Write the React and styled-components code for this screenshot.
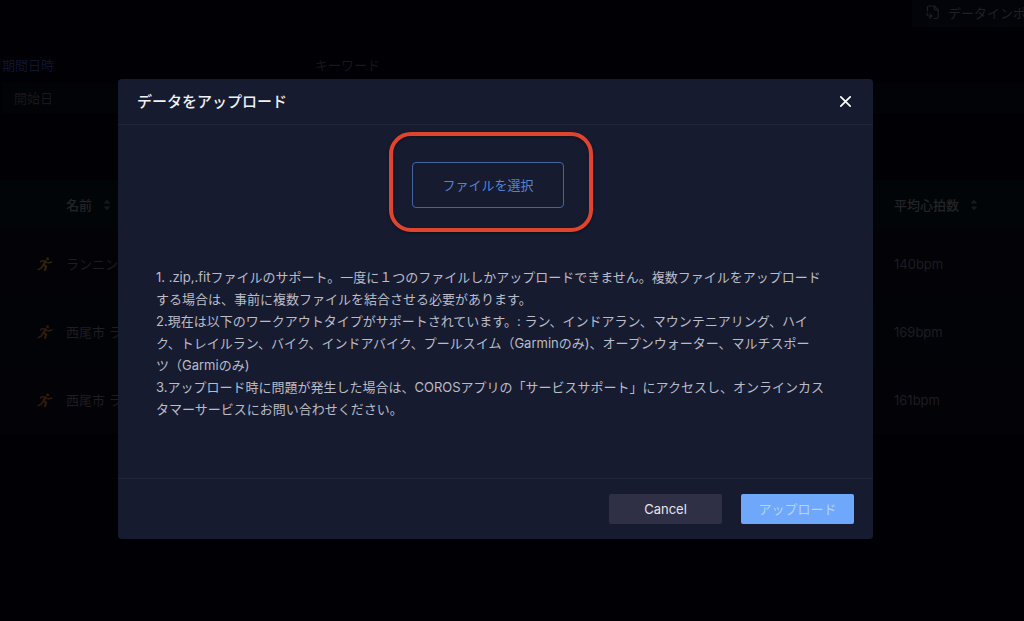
import React from 'react';
import styled, { createGlobalStyle } from 'styled-components';

const GlobalStyle = createGlobalStyle`
	* {
		box-sizing: border-box;
	}

	body {
		margin: 0;
		min-height: 100vh;
		overflow: hidden;
		background: #000005;
		font-family: Inter, 'Noto Sans CJK JP', sans-serif;
		font-size: 13px;
		line-height: 20px;
	}

	button,
	input {
		font: inherit;
	}
`;

const Page = styled.main`
	color: #1d1d22;
`;

const TopBar = styled.div`
	display: flex;
	justify-content: flex-end;
	height: 27px;
`;

const ImportButton = styled.button`
	display: flex;
	align-items: center;
	gap: 8px;
	width: 112px;
	padding: 0 0 2px 14px;
	overflow: hidden;
	border: 0;
	background: #030409;
	color: #1f1f24;
	white-space: nowrap;

	svg {
		flex: none;
	}
`;

const Filters = styled.form`
	display: grid;
	grid-template-columns: 313px 1fr;
	padding-top: 28px;
`;

const Field = styled.label`
	display: flex;
	flex-direction: column;
	gap: 8px;
	padding-left: 2px;
	color: ${p => (p.$active ? '#11142a' : '#17171c')};
`;

const Input = styled.input`
	width: 100%;
	height: 30px;
	padding: 0 12px;
	border: 0;
	background: #020307;
	color: #17171c;

	&::placeholder {
		color: #17171c;
		opacity: 1;
	}
`;

const Table = styled.table`
	width: 100%;
	margin-top: 67px;
	border-collapse: collapse;
	table-layout: fixed;
	text-align: left;
`;

const HeadRow = styled.tr`
	height: 50px;
	background: #020507;
`;

const Row = styled.tr`
	height: 68px;
	background: ${p => (p.$odd ? '#020307' : '#030207')};
`;

const Th = styled.th`
	width: ${p => p.$width};
	padding: 0;
	color: #222427;
	font-weight: 500;
`;

const Td = styled.td`
	padding: 0;
`;

const IconCell = styled(Td)`
	padding-left: 37px;
	color: ${p => p.$color};

	svg {
		display: block;
	}
`;

const SortLabel = styled.span`
	display: flex;
	align-items: center;
	gap: 11px;
`;

const Overlay = styled.div`
	position: fixed;
	inset: 0;
	display: grid;
	align-items: start;
	padding: 79px 151px 0 118px;
`;

const Modal = styled.section`
	border-radius: 4px;
	background: #171b30;
	color: #babcc7;
`;

const ModalHeader = styled.header`
	display: flex;
	align-items: center;
	justify-content: space-between;
	height: 46px;
	padding: 0 19px;
	border-bottom: 1px solid #20253a;
`;

const Title = styled.h2`
	margin: 0;
	color: #f0f1f5;
	font-size: 15px;
	font-weight: 500;
`;

const CloseButton = styled.button`
	display: flex;
	padding: 2px;
	border: 0;
	background: none;
	color: #fff;
`;

const ModalBody = styled.div`
	padding: 37px 30px 58px 38px;
`;

const FilePicker = styled.div`
	display: flex;
	justify-content: center;
	padding-right: 23px;
`;

const Highlight = styled.div`
	position: relative;

	&::after {
		content: '';
		position: absolute;
		inset: -30px -29px -24px -23px;
		border: 4px solid #e0442c;
		border-radius: 22px;
		box-shadow: 0 1px 3px rgba(0, 0, 0, 0.5), inset 0 1px 3px rgba(0, 0, 0, 0.4);
		pointer-events: none;
	}
`;

const FileButton = styled.button`
	width: 152px;
	height: 46px;
	border: 1px solid #42659f;
	border-radius: 4px;
	background: none;
	color: #5284d4;
`;

const Notes = styled.p`
	margin: 58px 0 0;
	line-height: 22px;
	white-space: nowrap;
`;

const ModalFooter = styled.footer`
	display: flex;
	justify-content: flex-end;
	gap: 19px;
	padding: 15px 19px;
	border-top: 1px solid #20253a;
`;

const Button = styled.button`
	width: 113px;
	height: 30px;
	border: 0;
	border-radius: 2px;
	background: ${p => (p.$primary ? '#6fa8fb' : '#2f3046')};
	color: ${p => (p.$primary ? '#b4d4ff' : '#e4e5ea')};
`;

const rows = [
	{ name: 'ランニング', heartRate: '140bpm', color: '#302407' },
	{ name: '西尾市 ランニング', heartRate: '169bpm', color: '#301b09' },
	{ name: '西尾市 ランニング', heartRate: '161bpm', color: '#301b09' },
];

function SortIcon() {
	return (
		<svg width="8" height="12" viewBox="0 0 8 12" fill="#17191c">
			<path d="M4 0.5 7.2 4.5H0.8zM4 11.5 0.8 7.5h6.4z" />
		</svg>
	);
}

function RunIcon() {
	return (
		<svg
			width="16"
			height="14"
			viewBox="0 0 16 14"
			fill="none"
			stroke="currentColor"
			strokeWidth="1.6"
			strokeLinecap="round"
			strokeLinejoin="round"
		>
			<circle cx="10.6" cy="1.8" r="1.5" fill="currentColor" stroke="none" />
			<path d="M3.4 4.8 5.4 3.6l3.2.6 2.4 1.8 3.8-1" strokeWidth="1.4" />
			<path d="M8.6 4.4 6.4 7.8l2.8 1.8-1.2 3.4" strokeWidth="2.2" />
			<path d="M5.8 8.8 4.4 11 1.2 12.6" />
		</svg>
	);
}

function ImportIcon() {
	return (
		<svg
			width="14"
			height="15"
			viewBox="0 0 14 15"
			fill="none"
			stroke="currentColor"
			strokeWidth="1.2"
			strokeLinecap="round"
			strokeLinejoin="round"
		>
			<path d="M1.5 6V2.4Q1.5 1 3 1h5.2l4 4v6.6q0 1.9-1.9 1.9H8" />
			<path d="M8.2 1v2.6q0 1.4 1.4 1.4h2.6" />
			<path d="M1 8v1.2q0 1.8 1.8 1.8h2.7M3.8 8.8 6 11l-2.2 2.2" />
		</svg>
	);
}

function CloseIcon() {
	return (
		<svg
			width="13"
			height="13"
			viewBox="0 0 13 13"
			fill="none"
			stroke="currentColor"
			strokeWidth="1.7"
			strokeLinecap="round"
		>
			<path d="M1.8 1.8l9.4 9.4M11.2 1.8l-9.4 9.4" />
		</svg>
	);
}

export default function App() {
	return (
		<>
			<GlobalStyle />
			<Page>
				<TopBar>
					<ImportButton type="button">
						<ImportIcon />
						データインポート
					</ImportButton>
				</TopBar>

				<Filters>
					<Field $active>
						期間日時
						<Input placeholder="開始日" />
					</Field>
					<Field>
						キーワード
						<Input />
					</Field>
				</Filters>

				<Table>
					<thead>
						<HeadRow>
							<Th $width="66px" />
							<Th>
								<SortLabel>
									名前 <SortIcon />
								</SortLabel>
							</Th>
							<Th $width="130px">
								<SortLabel>
									平均心拍数 <SortIcon />
								</SortLabel>
							</Th>
						</HeadRow>
					</thead>
					<tbody>
						{rows.map((row, i) => (
							<Row key={i} $odd={i % 2 === 1}>
								<IconCell $color={row.color}>
									<RunIcon />
								</IconCell>
								<Td>{row.name}</Td>
								<Td>{row.heartRate}</Td>
							</Row>
						))}
					</tbody>
				</Table>
			</Page>

			<Overlay>
				<Modal role="dialog" aria-labelledby="upload-title">
					<ModalHeader>
						<Title id="upload-title">データをアップロード</Title>
						<CloseButton type="button" aria-label="閉じる">
							<CloseIcon />
						</CloseButton>
					</ModalHeader>

					<ModalBody>
						<FilePicker>
							<Highlight>
								<FileButton type="button">ファイルを選択</FileButton>
							</Highlight>
						</FilePicker>

						<Notes>
							1. .zip,.fitファイルのサポート。一度に１つのファイルしかアップロードできません。複数ファイルをアップロード
							<br />
							する場合は、事前に複数ファイルを結合させる必要があります。
							<br />
							2.現在は以下のワークアウトタイプがサポートされています。: ラン、インドアラン、マウンテニアリング、ハイ
							<br />
							ク、トレイルラン、バイク、インドアバイク、プールスイム（Garminのみ)、オープンウォーター、マルチスポー
							<br />
							ツ（Garmiのみ)
							<br />
							3.アップロード時に問題が発生した場合は、COROSアプリの「サービスサポート」にアクセスし、オンラインカス
							<br />
							タマーサービスにお問い合わせください。
						</Notes>
					</ModalBody>

					<ModalFooter>
						<Button type="button">Cancel</Button>
						<Button type="button" $primary>
							アップロード
						</Button>
					</ModalFooter>
				</Modal>
			</Overlay>
		</>
	);
}
